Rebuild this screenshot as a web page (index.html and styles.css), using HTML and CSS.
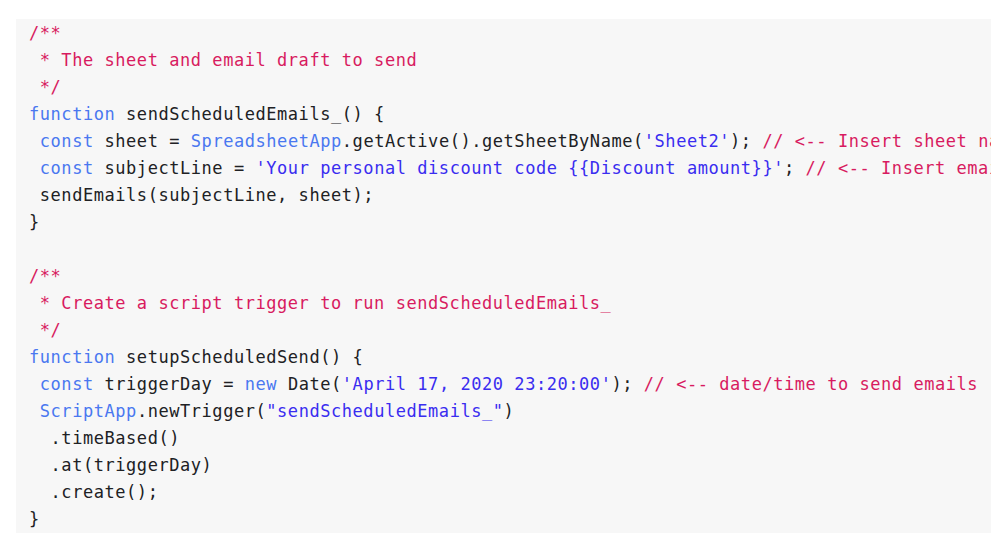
FILE: index.html
```html
<!DOCTYPE html>
<html lang="en">
<head>
<meta charset="utf-8">
<title>Scheduled emails</title>
<link rel="stylesheet" href="styles.css">
</head>
<body>
<div class="page">
<pre class="code"><code><span class="com">/**</span>
<span class="com"> * The sheet and email draft to send</span>
<span class="com"> */</span>
<span class="kw">function</span> sendScheduledEmails_() {
 <span class="kw">const</span> sheet = <span class="kw">SpreadsheetApp</span>.getActive().getSheetByName(<span class="str">'Sheet2'</span>); <span class="com">// &lt;-- Insert sheet name here</span>
 <span class="kw">const</span> subjectLine = <span class="str">'Your personal discount code {{Discount amount}}'</span>; <span class="com">// &lt;-- Insert email subject line here</span>
 sendEmails(subjectLine, sheet);
}

<span class="com">/**</span>
<span class="com"> * Create a script trigger to run sendScheduledEmails_</span>
<span class="com"> */</span>
<span class="kw">function</span> setupScheduledSend() {
 <span class="kw">const</span> triggerDay = <span class="kw">new</span> Date(<span class="str">'April 17, 2020 23:20:00'</span>); <span class="com">// &lt;-- date/time to send emails</span>
 <span class="kw">ScriptApp</span>.newTrigger(<span class="str">"sendScheduledEmails_"</span>)
  .timeBased()
  .at(triggerDay)
  .create();
}</code></pre>
</div>
</body>
</html>
```

FILE: styles.css
```css
html, body {
  margin: 0;
  padding: 0;
  background: #ffffff;
}

.page {
  padding: 19px 16px 0 16px;
}

.code {
  margin: 0;
  width: 975px;
  box-sizing: border-box;
  padding: 1px 0 0 13px;
  background: #f7f7f7;
  border-bottom: 1px solid #ebebeb;
  overflow: hidden;
  white-space: pre;
  font-family: "DejaVu Sans Mono", "Liberation Mono", monospace;
  font-size: 17px;
  letter-spacing: 0.55px;
  line-height: 27px;
  color: #202124;
}

.code code {
  font-family: inherit;
}

.com {
  color: #d81b60;
}

.kw {
  color: #4a78f0;
}

.str {
  color: #3a2df0;
}
```
